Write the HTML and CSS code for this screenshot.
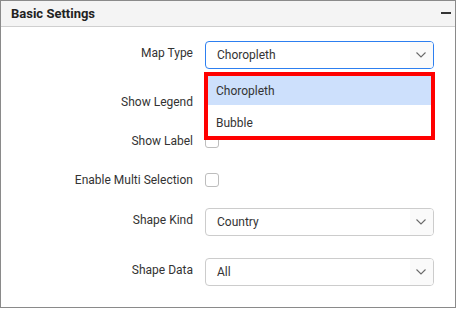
FILE: index.html
```html
<!DOCTYPE html>
<html>
<head>
<meta charset="utf-8">
<link rel="stylesheet" href="styles.css">
</head>
<body>
<div class="panel">
  <div class="panel-header">
    <span class="panel-title">Basic Settings</span>
    <span class="collapse-icon"></span>
  </div>
  <div class="panel-body">
    <div class="row">
      <label class="label label-up">Map Type</label>
      <div class="control">
        <div class="dropdown dropdown-focus">
          <span class="dropdown-text">Choropleth</span>
          <span class="dropdown-icon"><svg width="10" height="6" viewBox="0 0 10 6"><path d="M0.5 0.5 L5 5 L9.5 0.5" fill="none" stroke="#6b6b6b" stroke-width="1.1"/></svg></span>
        </div>
        <div class="popup">
          <div class="popup-item popup-item-active">Choropleth</div>
          <div class="popup-item popup-item-last">Bubble</div>
        </div>
      </div>
    </div>
    <div class="row row-legend">
      <label class="label">Show Legend</label>
      <div class="control"><span class="checkbox"></span></div>
    </div>
    <div class="row row-check">
      <label class="label">Show Label</label>
      <div class="control"><span class="checkbox"></span></div>
    </div>
    <div class="row row-check">
      <label class="label">Enable Multi Selection</label>
      <div class="control"><span class="checkbox"></span></div>
    </div>
    <div class="row row-kind">
      <label class="label label-up">Shape Kind</label>
      <div class="control">
        <div class="dropdown">
          <span class="dropdown-text">Country</span>
          <span class="dropdown-icon"><svg width="10" height="6" viewBox="0 0 10 6"><path d="M0.5 0.5 L5 5 L9.5 0.5" fill="none" stroke="#6b6b6b" stroke-width="1.1"/></svg></span>
        </div>
      </div>
    </div>
    <div class="row row-data">
      <label class="label label-up">Shape Data</label>
      <div class="control">
        <div class="dropdown">
          <span class="dropdown-text">All</span>
          <span class="dropdown-icon"><svg width="10" height="6" viewBox="0 0 10 6"><path d="M0.5 0.5 L5 5 L9.5 0.5" fill="none" stroke="#6b6b6b" stroke-width="1.1"/></svg></span>
        </div>
      </div>
    </div>
  </div>
</div>
</body>
</html>
```
FILE: styles.css
```css
* { box-sizing: border-box; }
html, body {
  margin: 0;
  padding: 0;
  background: #ffffff;
}
body {
  font-family: Roboto, "Liberation Sans", Arial, sans-serif;
  color: #333333;
}
.panel {
  width: 456px;
  height: 308px;
  border: 1px solid #8a8a8a;
  background: #ffffff;
}
.panel-header {
  height: 26px;
  background: #f4f4f4;
  border-bottom: 1px solid #cfcfcf;
  display: flex;
  align-items: center;
  justify-content: space-between;
  padding: 0 4px 1px 10px;
}
.panel-title {
  font-size: 13px;
  font-weight: 700;
  color: #222222;
}
.collapse-icon {
  width: 10px;
  height: 2px;
  background: #333333;
}
.panel-body {
  padding-top: 14px;
  display: flex;
  flex-direction: column;
}
.row {
  display: grid;
  grid-template-columns: 192px 229px;
  column-gap: 12px;
  height: 28px;
  align-items: center;
}
.row-legend { margin-top: 19px; }
.row-check { margin-top: 11px; }
.row-kind { margin-top: 14px; }
.row-data { margin-top: 22px; }
.label {
  font-size: 12px;
  text-align: right;
  color: #333333;
  line-height: 16px;
}
.label-up { padding-bottom: 4px; }
.control {
  position: relative;
  height: 28px;
  display: flex;
  align-items: center;
}
.dropdown {
  width: 229px;
  height: 28px;
  border: 1px solid #cccccc;
  border-radius: 4px;
  display: flex;
  align-items: center;
  justify-content: space-between;
  background: #ffffff;
  overflow: hidden;
}
.dropdown-focus { border-color: #2d7ff0; }
.dropdown-text {
  font-size: 12px;
  color: #333333;
  padding-left: 11px;
}
.dropdown-icon {
  width: 23px;
  height: 100%;
  background: #fafafa;
  display: flex;
  align-items: center;
  justify-content: center;
  padding-right: 2px;
}
.dropdown-icon svg { display: block; }
.checkbox {
  width: 14px;
  height: 14px;
  border: 1px solid #bdbdbd;
  border-radius: 3px;
  background: #ffffff;
}
.popup {
  position: absolute;
  top: 31px;
  left: -1px;
  width: 231px;
  height: 68px;
  border: 4px solid #ff0000;
  background: #ffffff;
  z-index: 2;
}
.popup-item {
  height: 30px;
  line-height: 30px;
  font-size: 12px;
  padding-left: 8px;
  color: #333333;
}
.popup-item-active { background: #cde0fc; height: 29px; }
.popup-item-last { padding-top: 3px; }
```
